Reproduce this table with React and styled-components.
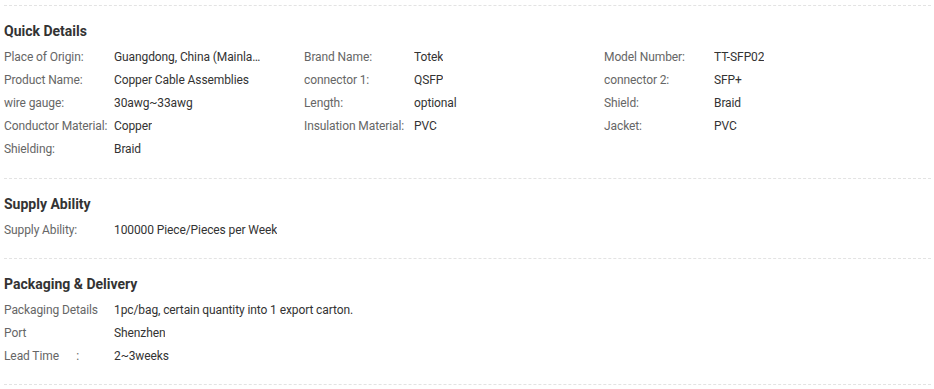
import React from 'react';
import styled, { createGlobalStyle, css } from 'styled-components';

const Global = createGlobalStyle`
    body {
        margin: 0;
        background: #fff;
        font-family: Roboto, "Liberation Sans", Arial, sans-serif;
    }
`;

const Wrapper = styled.div`
    margin: 5px 3px 0 4px;
    border-bottom: 1px dashed #e3e3e3;
`;

const Section = styled.section`
    border-top: 1px dashed #e3e3e3;
    padding: 15px 0 16px;

    &:first-of-type {
        padding-bottom: 17px;
    }
`;

const Title = styled.h3`
    margin: 0 0 5px;
    font-size: 14px;
    line-height: 20px;
    font-weight: 700;
    color: #333;
`;

const Grid = styled.div`
    display: grid;
    grid-template-columns: repeat(3, 300px);

    ${props => props.single && css`
        grid-template-columns: 1fr;
    `}
`;

const Item = styled.div`
    display: flex;
    font-size: 12px;
    line-height: 23px;
    letter-spacing: -0.1px;
    white-space: nowrap;
`;

const Label = styled.span`
    flex: none;
    width: 110px;
    color: #666;
`;

const Value = styled.span`
    color: #333;
    max-width: 150px;
    overflow: hidden;
    text-overflow: ellipsis;

    ${props => props.wide && css`
        max-width: none;
    `}
`;

const quick = [
    ['Place of Origin:', 'Guangdong, China (Mainland)'],
    ['Brand Name:', 'Totek'],
    ['Model Number:', 'TT-SFP02'],
    ['Product Name:', 'Copper Cable Assemblies'],
    ['connector 1:', 'QSFP'],
    ['connector 2:', 'SFP+'],
    ['wire gauge:', '30awg~33awg'],
    ['Length:', 'optional'],
    ['Shield:', 'Braid'],
    ['Conductor Material:', 'Copper'],
    ['Insulation Material:', 'PVC'],
    ['Jacket:', 'PVC'],
    ['Shielding:', 'Braid'],
];

const supply = [
    ['Supply Ability:', '100000 Piece/Pieces per Week'],
];

const packaging = [
    ['Packaging Details', '1pc/bag, certain quantity into 1 export carton.'],
    ['Port', 'Shenzhen'],
    ['Lead Time\u00a0\u00a0\u00a0\u00a0\u00a0\u00a0:', '2~3weeks'],
];

const Block = ({ title, items, single }) => (
    <Section>
        <Title>{title}</Title>
        <Grid single={single}>
            {items.map(([k, v]) => (
                <Item key={k}>
                    <Label>{k}</Label>
                    <Value wide={single}>{v}</Value>
                </Item>
            ))}
        </Grid>
    </Section>
);

const App = () => {
    return (
        <Wrapper>
            <Global />
            <Block title="Quick Details" items={quick} />
            <Block title="Supply Ability" items={supply} single />
            <Block title="Packaging & Delivery" items={packaging} single />
        </Wrapper>
    );
};

export default App;
